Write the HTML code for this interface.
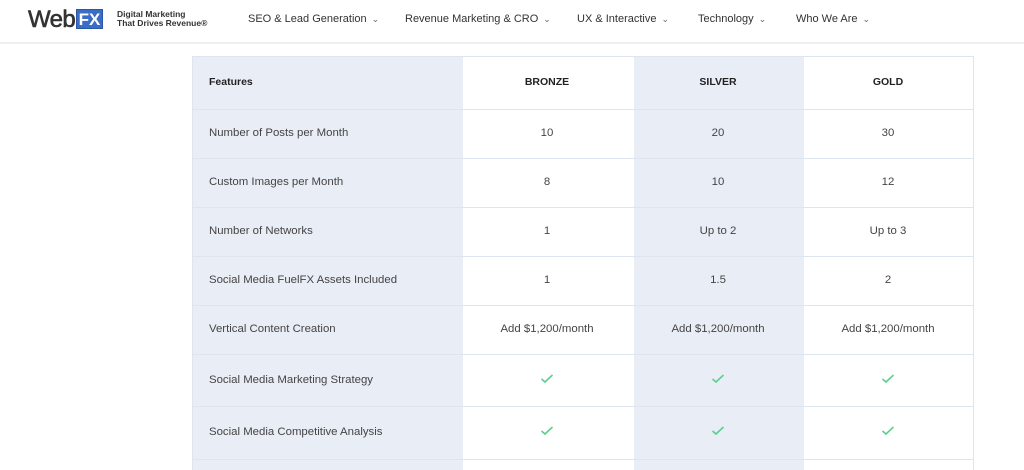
<!DOCTYPE html>
<html><head><meta charset="utf-8"><style>
*{margin:0;padding:0;box-sizing:border-box}
body{width:1024px;height:470px;overflow:hidden;background:#fff;font-family:"Liberation Sans",sans-serif;color:#333;position:relative}
.hdr{position:absolute;left:0;top:0;width:1024px;height:44px;border-bottom:2px solid #eef0f4;background:#fff}
.web{position:absolute;left:28px;top:6px;font-size:24px;font-weight:normal;color:#333;letter-spacing:-0.6px;-webkit-text-stroke:0.6px #333}
.fx{position:absolute;left:76px;top:9px;width:27px;height:20px;background:#3b6cc6;border:1px solid #2c57a8;color:#fff;font-weight:bold;font-size:17px;line-height:19px;text-align:center}
.tag{position:absolute;left:117px;top:10px;font-size:8.5px;font-weight:bold;line-height:9px;color:#333}
.nav{position:absolute;top:13px;font-size:11px;color:#333}
.nav span{font-size:9px;margin-left:5px;color:#666}
.tbl{position:absolute;left:192px;top:56px;width:782px;height:414px;border:1px solid #dfe5f0;border-bottom:none}
.col{position:absolute;top:0;bottom:0}
.row{position:absolute;left:0;right:0;height:1px;background:#dfe5f0}
.c{position:absolute;font-size:11.4px;color:#444;transform:translateY(-50%)}
.ctr{text-align:center}
.b{font-weight:bold;color:#222;font-size:10.5px}
</style></head><body>
<div class="hdr">
<div class="web">Web</div><div class="fx">FX</div>
<div class="tag">Digital Marketing<br>That Drives Revenue®</div>
<div class="nav" style="left:248px">SEO &amp; Lead Generation<span>⌄</span></div>
<div class="nav" style="left:405px">Revenue Marketing &amp; CRO<span>⌄</span></div>
<div class="nav" style="left:577px">UX &amp; Interactive<span>⌄</span></div>
<div class="nav" style="left:698px">Technology<span>⌄</span></div>
<div class="nav" style="left:796px">Who We Are<span>⌄</span></div>
</div>
<div class="tbl">
<div class="col" style="left:0;width:270px;background:#e9edf6"></div>
<div class="col" style="left:441px;width:170px;background:#e9edf6"></div>
<div class="row" style="top:52px"></div>
<div class="row" style="top:101px"></div>
<div class="row" style="top:150px"></div>
<div class="row" style="top:199px"></div>
<div class="row" style="top:248px"></div>
<div class="row" style="top:297px"></div>
<div class="row" style="top:349px"></div>
<div class="row" style="top:402px"></div>
</div>
<div id="cells"></div>
<script>
var rows=[["Features","BRONZE","SILVER","GOLD",82],
["Number of Posts per Month","10","20","30",133],
["Custom Images per Month","8","10","12",182],
["Number of Networks","1","Up to 2","Up to 3",231],
["Social Media FuelFX Assets Included","1","1.5","2",280],
["Vertical Content Creation","Add $1,200/month","Add $1,200/month","Add $1,200/month",329],
["Social Media Marketing Strategy","✓","✓","✓",380],
["Social Media Competitive Analysis","✓","✓","✓",432]];
var cx=[547,718,888],h="";
var chk='<svg width="14" height="10" viewBox="0 0 14 10"><path d="M1.5 5.5L5 8.5L12.5 1.5" fill="none" stroke="#5ad08e" stroke-width="1.6"/></svg>';
rows.forEach(function(r,i){
h+='<div class="c'+(i==0?' b':'')+'" style="left:209px;top:'+r[4]+'px">'+r[0]+'</div>';
for(var j=0;j<3;j++){var t=r[j+1];
h+='<div class="c ctr'+(i==0?' b':'')+'" style="left:'+(cx[j]-80)+'px;width:160px;top:'+r[4]+'px">'+(t=="✓"?chk:t)+'</div>';}
});
document.getElementById("cells").innerHTML=h;
</script>
</body></html>
